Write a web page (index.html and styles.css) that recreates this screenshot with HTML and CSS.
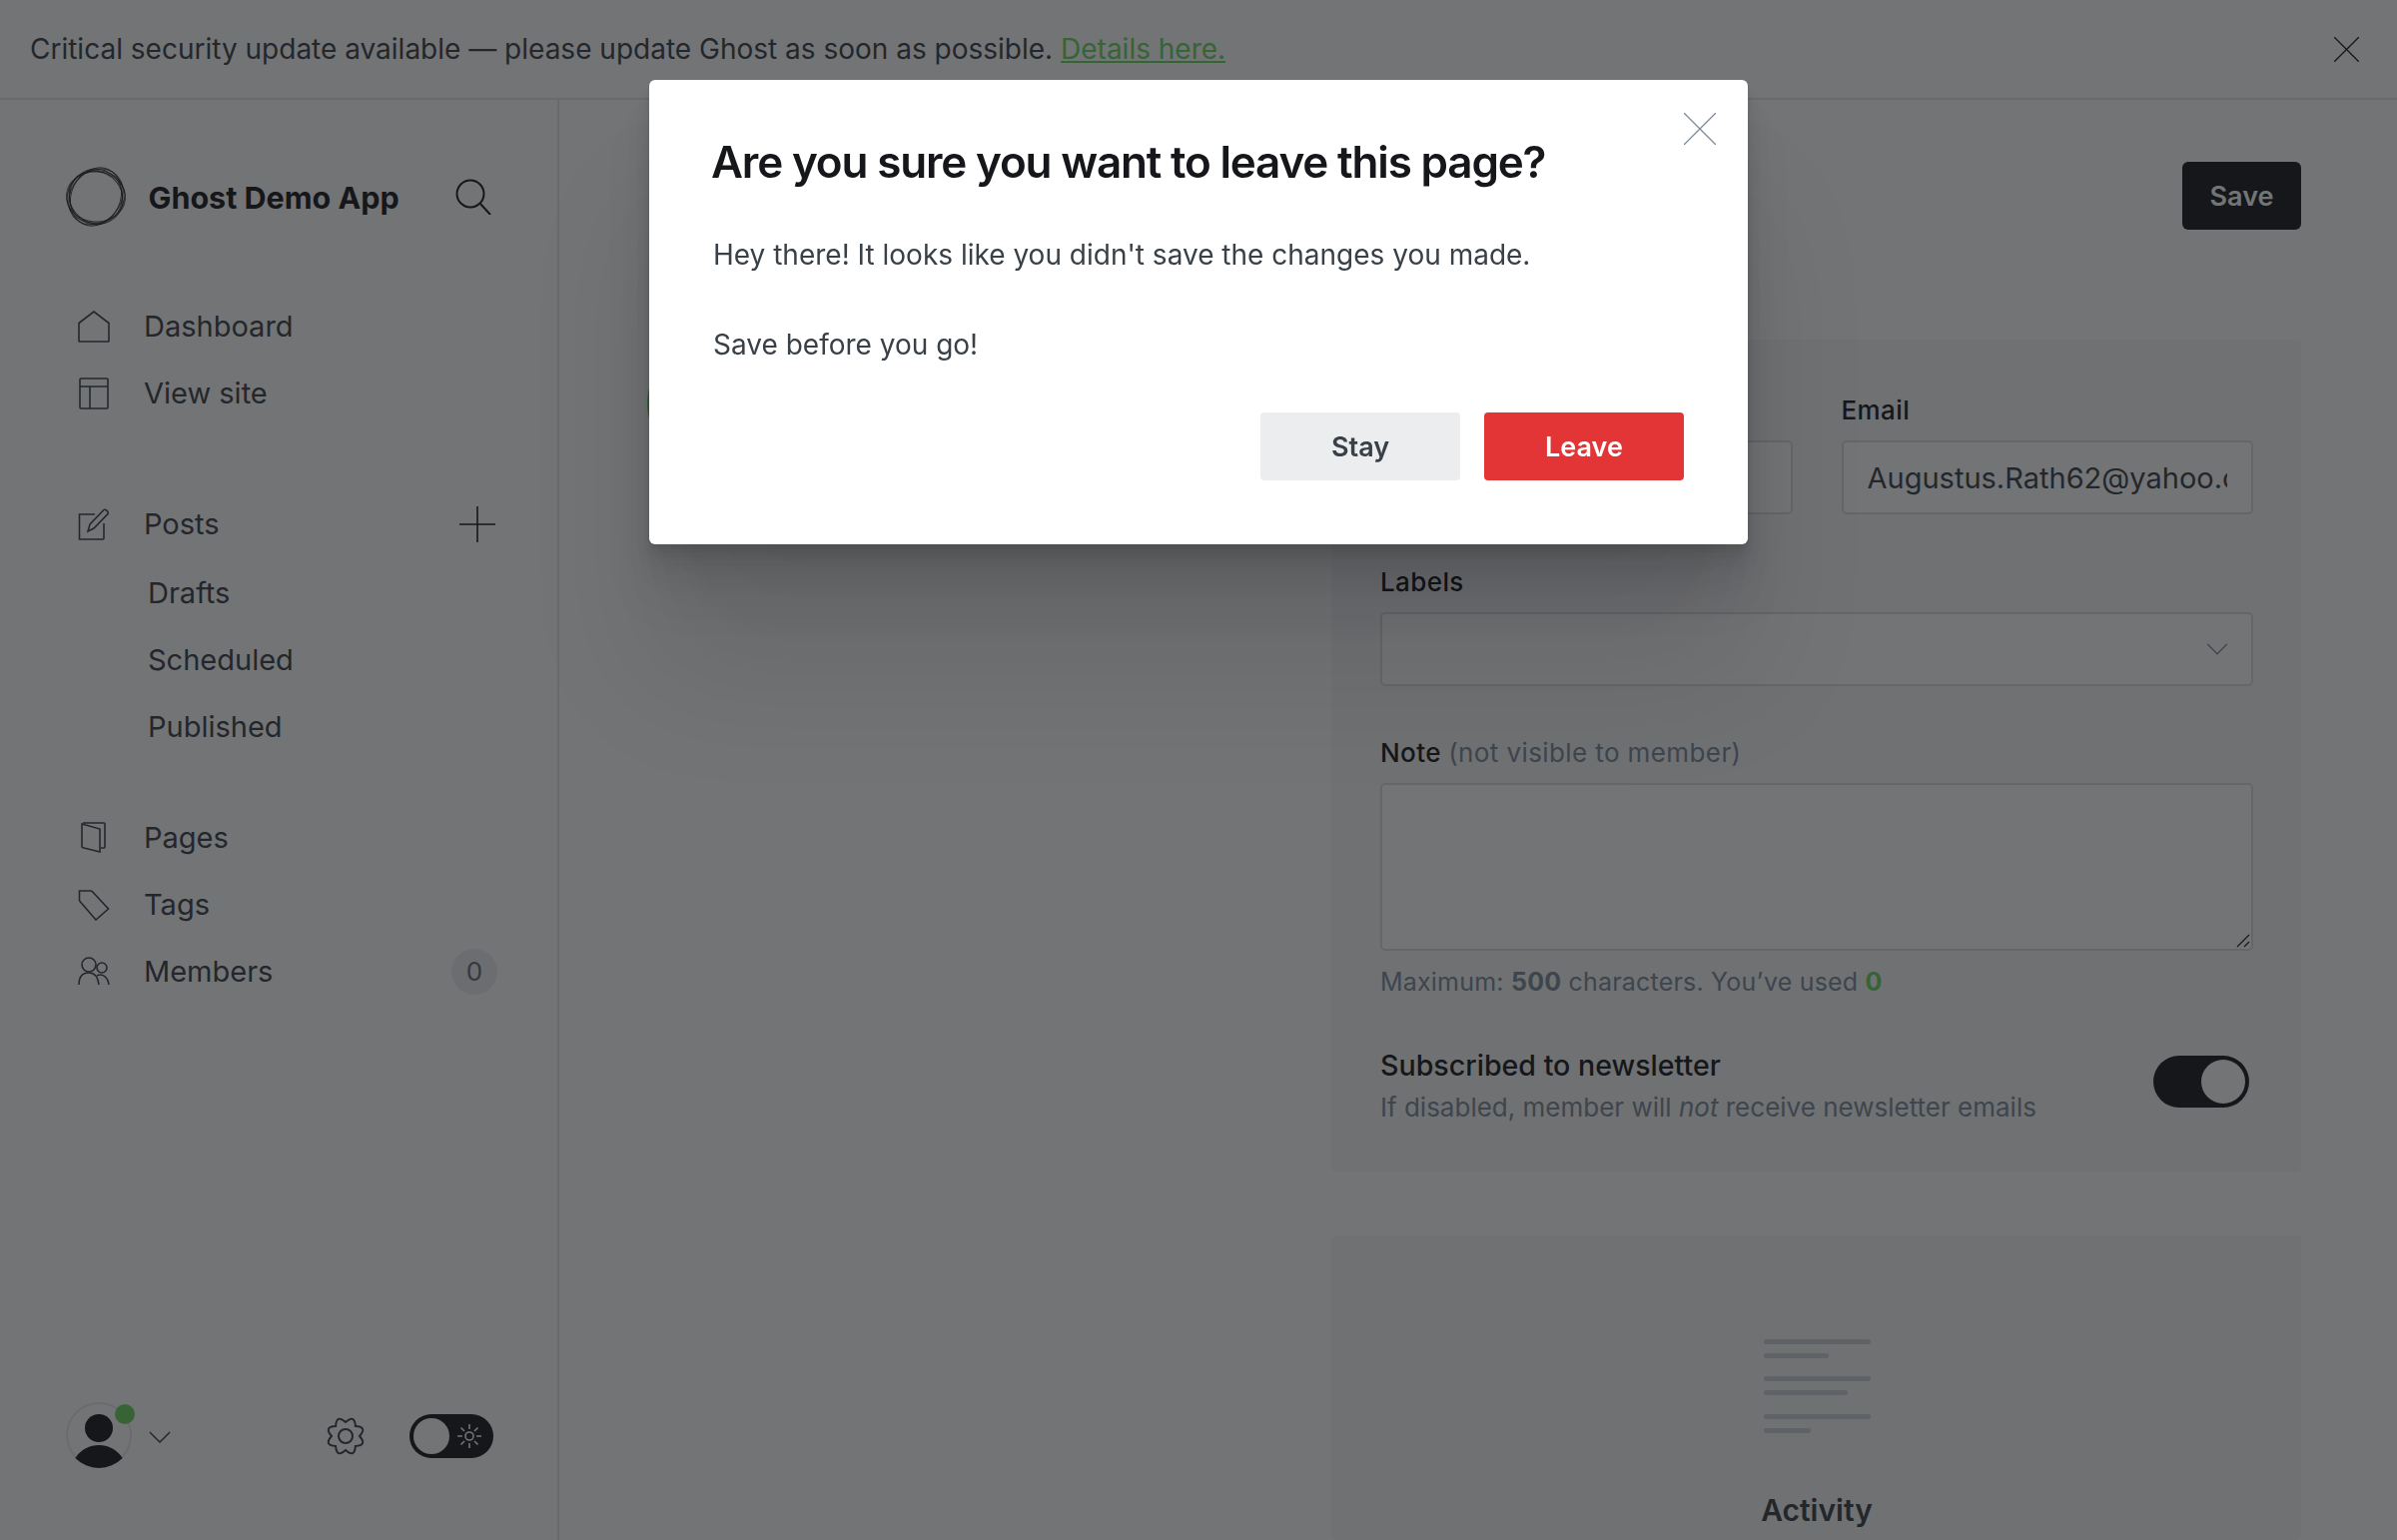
FILE: index.html
```html
<!DOCTYPE html>
<html lang="en">
<head>
  <meta charset="UTF-8">
  <title>Ghost Demo App</title>
  <link rel="stylesheet" href="styles.css">
</head>
<body>

  <div class="alert">
    <p class="alert-text">Critical security update available — please update Ghost as soon as possible. <a href="#">Details here.</a></p>
    <svg class="alert-close" viewBox="0 0 24 24"><path d="M0 0l24 24M24 0L0 24"/></svg>
  </div>

  <div class="app">
    <aside class="sidebar">
      <div class="brand">
        <svg class="brand-logo" viewBox="0 0 60 60">
          <ellipse cx="30" cy="30" rx="30" ry="24.500" transform="rotate(-65 30 30)"/>
          <ellipse cx="30" cy="30" rx="30" ry="25" transform="rotate(-50 30 30)"/>
          <ellipse cx="30" cy="30" rx="29.500" ry="25" transform="rotate(5 30 30)"/>
          <ellipse cx="30" cy="30" rx="29" ry="26" transform="rotate(-15 30 30)"/>
          <ellipse cx="30" cy="30.500" rx="28" ry="25.500" transform="rotate(40 30 30.500)"/>
          <ellipse cx="30" cy="30" rx="26.500" ry="28"/>
        </svg>
        <span class="brand-name">Ghost Demo App</span>
        <svg class="brand-search" viewBox="0 0 36 36"><circle cx="15" cy="15" r="13.500"/><path d="M25 25l10 11"/></svg>
      </div>

      <nav class="nav">
        <ul class="nav-group">
          <li class="nav-item">
            <svg class="nav-icon" viewBox="0 0 32 32"><path d="M1 30.500V12.500L16 1l15 11.500v18a.5.5 0 0 1-.5.5h-29a.5.5 0 0 1-.5-.5z"/></svg>
            Dashboard
          </li>
          <li class="nav-item">
            <svg class="nav-icon" viewBox="0 0 32 32"><rect x="2" y="1" width="28" height="30" rx="1"/><path d="M2 9h28M12 9v22"/></svg>
            View site
          </li>
        </ul>

        <ul class="nav-group nav-group-posts">
          <li class="nav-item nav-item-posts">
            <svg class="nav-icon" viewBox="0 0 32 32"><path d="M17 6H1.500v25H25a1 1 0 0 0 1-1V15"/><path d="M10 23l2-7L26 1.500c1-1 5 1.500 4 4L16 20z"/></svg>
            Posts
            <svg class="nav-plus" viewBox="0 0 36 36"><path d="M18 0v36M0 18h36"/></svg>
          </li>
          <li class="nav-sub">Drafts</li>
          <li class="nav-sub">Scheduled</li>
          <li class="nav-sub">Published</li>
        </ul>

        <ul class="nav-group">
          <li class="nav-item">
            <svg class="nav-icon" viewBox="0 0 32 32"><path d="M5 1h21a1 1 0 0 1 1 1v23a1 1 0 0 1-1 1h-3"/><path d="M4 2l18 5v23L6 26a2 2 0 0 1-2-2z"/></svg>
            Pages
          </li>
          <li class="nav-item">
            <svg class="nav-icon" viewBox="0 0 32 32"><path d="M1.500 2h11.500a2 2 0 0 1 1.500.7L30.500 20 18 31 2 12.500a2 2 0 0 1-.5-1.300z"/></svg>
            Tags
          </li>
          <li class="nav-item">
            <svg class="nav-icon" viewBox="0 0 32 32"><circle cx="11" cy="9" r="7"/><path d="M1 29c0-8 4-12 10-12s9 4 10 12"/><circle cx="24" cy="12" r="5"/><path d="M19 20c5-3 11 1 12 9"/></svg>
            Members
            <span class="nav-count">0</span>
          </li>
        </ul>
      </nav>

      <div class="sidebar-foot">
        <div class="user">
          <svg class="user-avatar" viewBox="0 0 66 66">
            <circle class="user-ring" cx="33" cy="33" r="32"/>
            <ellipse cx="33" cy="26" rx="14" ry="14"/>
            <path d="M9.400 56C15 47 24 43 33 43s18 4 23.600 13A33 33 0 0 1 9.400 56z"/>
          </svg>
          <span class="user-dot"></span>
        </div>
        <svg class="user-caret" viewBox="0 0 24 13"><path d="M1 1l11 11L23 1"/></svg>
        <svg class="foot-gear" viewBox="0 0 40 40"><circle cx="20" cy="20" r="7"/><path d="M20 6Q29.190-2.170 29.900 10.100 42.170 10.810 34 20 42.170 29.190 29.900 29.900 29.190 42.170 20 34 10.810 42.170 10.100 29.900-2.170 29.190 6 20-2.170 10.810 10.100 10.100 10.810-2.170 20 6z"/></svg>
        <div class="mode-toggle">
          <span class="mode-knob"></span>
          <svg class="mode-sun" viewBox="0 0 24 24"><circle cx="12" cy="12" r="4"/><path d="M12 0v5M12 19v5M0 12h5M19 12h5M3.500 3.500L7 7M17 17l3.500 3.500M3.500 20.500L7 17M17 7l3.500-3.500"/></svg>
        </div>
      </div>
    </aside>

    <main class="main">
      <header class="main-head">
        <button class="btn-save">Save</button>
      </header>

      <div class="columns">
        <div class="col-left">
          <div class="member-avatar"></div>
        </div>
        <div class="col-right">
          <section class="card card-form">
            <div class="row">
              <div class="field">
                <label class="label">Name</label>
                <div class="input"></div>
              </div>
              <div class="field">
                <label class="label">Email</label>
                <div class="input"><span class="input-value">Augustus.Rath62@yahoo.com</span></div>
              </div>
            </div>

            <div class="field field-labels">
              <label class="label">Labels</label>
              <div class="input input-select">
                <svg class="select-caret" viewBox="0 0 20 12"><path d="M1 1l9 9 9-9"/></svg>
              </div>
            </div>

            <div class="field field-note">
              <label class="label">Note <span class="label-hint">(not visible to member)</span></label>
              <div class="textarea">
                <svg class="textarea-grip" viewBox="0 0 14 14"><path d="M1 13L13 1M8 13l5-5"/></svg>
              </div>
              <p class="hint">Maximum: <b>500</b> characters. You’ve used <b class="hint-ok">0</b></p>
            </div>

            <div class="subscribe">
              <div>
                <div class="subscribe-title">Subscribed to newsletter</div>
                <p class="subscribe-text">If disabled, member will <em>not</em> receive newsletter emails</p>
              </div>
              <span class="switch"><span class="switch-knob"></span></span>
            </div>
          </section>

          <section class="card card-activity">
            <div class="lines">
              <span class="line line-full"></span>
              <span class="line line-a"></span>
              <span class="line line-full"></span>
              <span class="line line-b"></span>
              <span class="line line-full"></span>
              <span class="line line-c"></span>
            </div>
            <h3 class="activity-title">Activity</h3>
          </section>
        </div>
      </div>
    </main>
  </div>

  <div class="backdrop"></div>

  <div class="modal">
    <svg class="modal-close" viewBox="0 0 32 32"><path d="M0 0l32 32M32 0L0 32"/></svg>
    <h1 class="modal-title">Are you sure you want to leave this page?</h1>
    <p class="modal-text">Hey there! It looks like you didn't save the changes you made.</p>
    <p class="modal-text">Save before you go!</p>
    <div class="modal-actions">
      <button class="btn btn-stay">Stay</button>
      <button class="btn btn-leave">Leave</button>
    </div>
  </div>

</body>
</html>
```

FILE: styles.css
```css
html, body {
  margin: 0; padding: 0; height: 100%;
  overflow: hidden;
  font-family: Inter, 'Noto Sans', sans-serif;
  color: #394047;
  background: #fff;
}
ul { list-style: none; margin: 0; padding: 0; }
p, h1, h3 { margin: 0; }
button { font-family: inherit; border: 0; cursor: pointer; }

/* alert bar */
.alert {
  height: 100px; box-sizing: border-box;
  display: flex; align-items: center; justify-content: space-between;
  padding: 0 38px 0 30px;
  border-bottom: 2px solid #e3e6e8;
  font-size: 28px; color: #394047;
}
.alert a { color: #68d85a; text-decoration: underline; }
.alert-close { width: 25px; height: 25px; fill: none; stroke: #15171a; stroke-width: 1.3; }

.app { display: flex; height: 1442px; }

/* sidebar */
.sidebar {
  width: 560px; flex: none; box-sizing: border-box;
  border-right: 2px solid #e3e6e8;
  padding: 64px 0 0 66px;
  display: flex; flex-direction: column;
}
.brand { display: flex; align-items: center; height: 66px; }
.brand-logo { width: 60px; height: 60px; fill: none; stroke: #15171a; stroke-width: 1; stroke-opacity: .75; overflow: visible; }
.brand-name { margin-left: 22.500px; font-size: 30.500px; font-weight: 700; color: #15171a; }
.brand-search { width: 36px; height: 36px; margin-left: 56px; fill: none; stroke: #15171a; stroke-width: 2; }

.nav { margin-top: 63px; }
.nav-group { margin-bottom: 64px; }
.nav-group-posts { margin-bottom: 44px; }
.nav-item-posts { margin-bottom: 2px; }
.nav-item, .nav-sub {
  height: 67px; display: flex; align-items: center;
  font-size: 29px; color: #394047;
}
.nav-sub { padding-left: 82px; }
.nav-icon {
  width: 32px; height: 32px; margin: 0 34px 0 12px; flex: none;
  fill: none; stroke: #394047; stroke-width: 1.600;
}
.nav-plus { width: 36px; height: 36px; margin-left: auto; margin-right: 62px; fill: none; stroke: #15171a; stroke-width: 1.600; }
.nav-count {
  margin-left: auto; margin-right: 60px;
  width: 46px; height: 46px; border-radius: 50%;
  display: flex; align-items: center; justify-content: center;
  background: #ebeef0; font-size: 26px; color: #5f6b76;
}

.sidebar-foot { margin-top: auto; height: 138px; display: flex; align-items: flex-start; }
.user { position: relative; width: 66px; height: 66px; flex: none; }
.user-avatar { width: 66px; height: 66px; fill: #15171a; }
.user-ring { fill: none; stroke: #e6e9eb; stroke-width: 2; }
.user-dot {
  position: absolute; top: 2px; right: -3px;
  width: 20px; height: 20px; border-radius: 50%;
  background: #68d85a;
}
.user-caret { width: 22px; height: 12px; margin: 29px 0 0 17px; fill: none; stroke: #394047; stroke-width: 1.600; }
.foot-gear { width: 40px; height: 40px; margin: 14px 0 0 155px; fill: none; stroke: #394047; stroke-width: 2; overflow: visible; }
.mode-toggle {
  width: 84px; height: 44px; border-radius: 22px; margin: 12px 0 0 44px;
  background: #15171a;
  display: flex; align-items: center;
}
.mode-knob { width: 36px; height: 36px; border-radius: 50%; margin-left: 4px; background: #fff; }
.mode-sun { width: 24px; height: 24px; margin-left: 8px; fill: none; stroke: #fff; stroke-width: 1.600; }

/* main column */
.main { flex: 1; min-width: 0; padding: 62px 96px 0 0; box-sizing: border-box; }
.main-head { height: 68px; display: flex; justify-content: flex-end; }
.btn-save {
  width: 119px; height: 68px; border-radius: 6px;
  background: #15171a; color: #fff; font-size: 27px; font-weight: 600;
}
.columns { display: flex; justify-content: space-between; margin-top: 110px; }
.col-left { padding-left: 88px; }
.member-avatar { width: 128px; height: 128px; border-radius: 50%; background: #68d85a; }
.col-right { width: 970px; }

.card { background: #f6f7f8; border-radius: 5px; }
.card-form { height: 834px; padding: 55px 48px 0; box-sizing: border-box; }
.row { display: flex; gap: 49px; }
.row .field { flex: 1; min-width: 0; }
.label { display: block; font-size: 26px; font-weight: 500; letter-spacing: .4px; color: #15171a; line-height: 32px; margin-bottom: 14px; }
.label-hint { font-weight: 400; color: #7c8b9a; }
.input {
  height: 74px; box-sizing: border-box;
  border: 2px solid #d9dde1; border-radius: 5px;
  background: #fff;
  display: flex; align-items: center;
  padding: 0 24px; overflow: hidden;
  font-size: 29px; color: #394047;
}
.input-value { white-space: nowrap; overflow: hidden; }
.input-select { justify-content: flex-end; }
.select-caret { width: 22px; height: 13px; margin-right: -1px; fill: none; stroke: #7c8b9a; stroke-width: 1.200; }
.field-labels { margin-top: 52px; }
.field-note { margin-top: 51px; }
.textarea {
  height: 168px; box-sizing: border-box;
  border: 2px solid #d9dde1; border-radius: 5px; background: #fff;
  display: flex; justify-content: flex-end; align-items: flex-end;
}
.textarea-grip { width: 14px; height: 14px; fill: none; stroke: #15171a; stroke-width: 1.200; margin: 0 1px 1px 0; }
.hint { margin-top: 15px; font-size: 25px; letter-spacing: .2px; line-height: 32px; color: #7c8b9a; }
.hint b { font-weight: 700; }
.hint-ok { color: #68d85a; }
.subscribe { margin-top: 51px; display: flex; align-items: flex-start; justify-content: space-between; padding-right: 4px; }
.subscribe-title { font-size: 28.600px; font-weight: 500; line-height: 34px; color: #15171a; }
.subscribe-text { margin-top: 9px; font-size: 26px; line-height: 32px; color: #7c8b9a; }
.switch {
  width: 96px; height: 52px; border-radius: 26px; background: #15171a; margin-top: 7px;
  display: flex; align-items: center; justify-content: flex-end;
}
.switch-knob { width: 44px; height: 44px; border-radius: 50%; background: #fff; margin-right: 4px; }

.card-activity { margin-top: 63px; height: 305px; padding-top: 104px; box-sizing: border-box; text-align: center; }
.lines { width: 107px; margin: 0 auto; display: flex; flex-direction: column; }
.line { display: block; height: 5px; border-radius: 2px; background: #ced4d9; margin-bottom: 9px; }
.line:nth-child(even) { margin-bottom: 18.300px; }
.line-full { width: 107px; }
.line-a { width: 65px; }
.line-b { width: 84px; }
.line-c { width: 47px; }
.activity-title { margin-top: 41px; font-size: 30px; font-weight: 600; color: #394047; }

/* overlay and dialog */
.backdrop { position: fixed; inset: 0; background: rgba(21,23,26,.6); }
.modal {
  position: fixed; top: 80px; left: 650px;
  width: 1100px; height: 465px; box-sizing: border-box;
  padding: 54px 64px 0 62px;
  background: #fff; border-radius: 6px;
  box-shadow:
    0 3px 3px rgba(0,0,0,.04),
    0 8px 8px rgba(0,0,0,.05),
    0 15px 16px rgba(0,0,0,.06),
    0 28px 28px rgba(0,0,0,.06),
    0 52px 52px rgba(0,0,0,.07),
    0 130px 128px rgba(0,0,0,.1);
}
.modal-close { position: absolute; top: 33px; right: 32px; width: 32px; height: 32px; fill: none; stroke: #7c8b9a; stroke-width: 1.300; }
.modal-title { font-size: 44px; font-weight: 600; letter-spacing: -1.170px; color: #15171a; line-height: 56px; }
.modal-text { font-size: 28px; color: #394047; margin-top: 42px; line-height: 48px; padding-left: 2px; }
.modal-title + .modal-text { margin-top: 41px; }
.modal-actions { margin-top: 44px; display: flex; justify-content: flex-end; gap: 24px; }
.btn { width: 200px; height: 68px; border-radius: 4px; font-size: 27px; font-weight: 600; }
.btn-stay { background: #ecedef; color: #394047; }
.btn-leave { background: #e33535; color: #fff; }
```
